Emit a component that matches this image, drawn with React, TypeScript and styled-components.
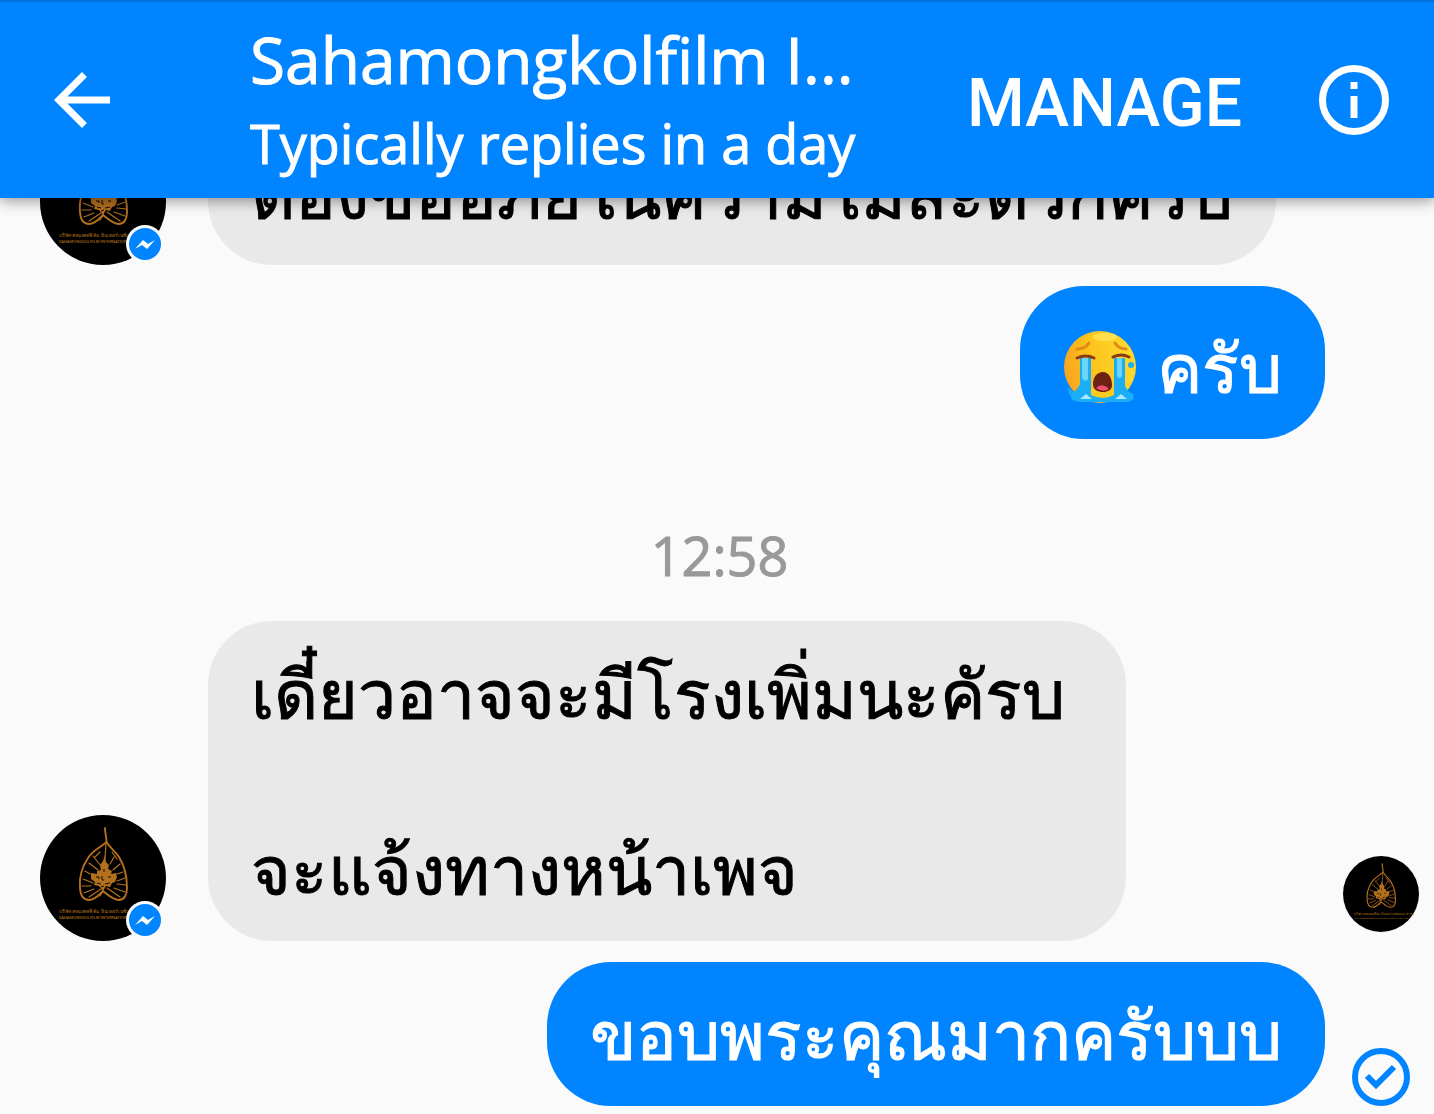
import React from 'react';
import styled, { createGlobalStyle } from 'styled-components';

const GlobalStyle = createGlobalStyle`
  *, *::before, *::after { box-sizing: border-box; }
  body {
    margin: 0;
    background: #fafafa;
    font-family: "Open Sans", "Noto Sans", sans-serif;
  }
`;

const Screen = styled.div`
  display: flex;
  flex-direction: column;
  height: 100vh;
  overflow: hidden;
`;

const Header = styled.header`
  position: relative;
  z-index: 1;
  flex: none;
  display: flex;
  align-items: center;
  padding: 15px 40px;
  border-top: 2px solid #0071db;
  background: #0084ff;
  color: #fff;
  box-shadow: 0 2px 14px rgba(0, 0, 0, 0.45);
`;

const IconButton = styled.button`
  display: flex;
  flex: none;
  padding: 0;
  border: 0;
  background: none;
  color: inherit;
  cursor: pointer;
`;

const Heading = styled.div`
  flex: 1;
  min-width: 0;
  padding-left: 126px;
  white-space: nowrap;
`;

const Title = styled.h1`
  margin: 0;
  font-size: 64px;
  font-weight: 400;
  line-height: 86px;
  -webkit-text-stroke: 1px currentColor;
`;

const Subtitle = styled.p`
  margin: 0;
  font-size: 54px;
  line-height: 80px;
  -webkit-text-stroke: 1px currentColor;
`;

const ManageButton = styled.button`
  flex: none;
  margin-right: 72px;
  padding: 8px 0 0;
  border: 0;
  background: none;
  color: inherit;
  font: 500 66px/80px Roboto, sans-serif;
  cursor: pointer;
`;

const Thread = styled.main`
  flex: 1;
  min-height: 0;
  display: flex;
  flex-direction: column;
  justify-content: flex-end;
  gap: 21px;
  overflow: hidden;
  padding: 0 15px 8px 40px;
`;

const Row = styled.div<{ $own?: boolean }>`
  flex: none;
  display: flex;
  align-items: flex-end;
  justify-content: ${(p) => (p.$own ? 'flex-end' : 'flex-start')};
`;

const Bubble = styled.div<{ $own?: boolean }>`
  padding: 28px 43px;
  border-radius: 64px;
  background: ${(p) => (p.$own ? '#0084ff' : '#e9e9e9')};
  color: ${(p) => (p.$own ? '#fff' : '#000')};
  font-size: 68px;
  line-height: 88px;
  white-space: pre-line;
  -webkit-text-stroke: 1px currentColor;
`;

const EmojiLine = styled.div`
  display: flex;
  align-items: center;
  gap: 20px;
  padding-top: 9px;
`;

const Status = styled.div<{ $lift?: boolean }>`
  flex: none;
  display: flex;
  justify-content: center;
  width: 76px;
  margin-left: ${(p) => (p.$lift ? 'auto' : '18px')};
  padding-bottom: ${(p) => (p.$lift ? '9px' : '0')};
`;

const Time = styled.time`
  align-self: center;
  padding-top: 50px;
  margin-right: 20px;
  color: #999;
  font-size: 54px;
  line-height: 90px;
  -webkit-text-stroke: 1px currentColor;
`;

const Sender = styled.div`
  position: relative;
  flex: none;
  display: flex;
  margin-right: 42px;
`;

const Badge = styled.svg`
  position: absolute;
  right: 2px;
  bottom: 2px;
`;

function CompanyLogo({ size }: { size: number }) {
  return (
    <svg width={size} height={size} viewBox="0 0 126 126" role="img" aria-label="Sahamongkolfilm">
      <circle cx="63" cy="63" r="63" fill="#000" />
      <g fill="none" stroke="#b3701f" strokeWidth="1.9" strokeLinecap="round" strokeLinejoin="round">
        <path d="M65 13c0 5 1.500 9 1.500 14C60 33 53 35 48 43 42 52 39 63 40 73c.5 8 4 12 9 12 6 0 10-5 14-9 5 4 10 9 16 9 5 0 8-5 8-12 0-12-3-23-8-31-4-6-9-9-12.500-15" />
        <path strokeWidth="1.2" d="M66 29l-1 14M60 37l-5 5M53 41l8 10M49 48l9 7M45 56l5 3M43 64l10 4M42 71l9 0M44 78l10-4M49 82l12-8M72 37l5 7M74 42l-4 7M80 49l-7 6M83 57l-6 2M85 63l-8 3M86 70l-9-1M85 77l-11-4M80 82l-13-9M63 76l-3 5" />
      </g>
      <g fill="#b3701f">
        <path d="M65 40l1 7 3 3-1 4 4 2-1 3 5-1 1 4-2 5-3 1-2 4-4-1-3 5-4-5-5-1 1-3-4-3 0-6 6 1 0-3 4-1-1-5 3-4z" />
      </g>
      <path
        d="M56 62h3v2M62 61v4h2M68 62h3M57 68l4 1M65 69l5-1M64 54v3M61 72l3-1"
        fill="none"
        stroke="#000"
        strokeWidth="0.9"
      />
      <g fill="#b3701f" fontFamily='"Noto Sans", sans-serif' fontWeight="500">
        <text x="19" y="98" fontSize="5">บริษัท สหมงคลฟิล์ม อินเตอร์เนชั่นแนล จำกัด</text>
        <text x="19" y="104" fontSize="4">SAHAMONGKOLFILM INTERNATIONAL CO., LTD</text>
      </g>
    </svg>
  );
}

function SenderAvatar() {
  return (
    <Sender>
      <CompanyLogo size={126} />
      <Badge width="38" height="38" viewBox="0 0 38 38" aria-hidden="true">
        <circle cx="19" cy="19" r="19" fill="#fafafa" />
        <circle cx="19" cy="19" r="16" fill="#0084ff" />
        <path d="M9 24l8-9 5 4 7-4-8 9-5-4z" fill="#fff" />
      </Badge>
    </Sender>
  );
}

function CryingFace() {
  return (
    <svg width="74" height="74" viewBox="0 0 74 74" role="img" aria-label="Loudly crying face">
      <defs>
        <linearGradient id="skin" x1="0" x2="1" y1="0.4" y2="0.2">
          <stop offset="0" stopColor="#f9a51f" />
          <stop offset="0.35" stopColor="#fcc21b" />
          <stop offset="1" stopColor="#ffdc2e" />
        </linearGradient>
      </defs>
      <circle cx="37" cy="37" r="36" fill="url(#skin)" />
      <ellipse cx="42" cy="7" rx="12" ry="4" fill="#ffe04a" />
      <g fill="none" stroke="#e08a1a" strokeWidth="3" strokeLinecap="round">
        <path d="M14 19q8 0 12-6M52 13q4 6 11 6" />
      </g>
      <path d="M8 64q8-6 9-10V28h11v36q10-3 23 0V28h11v28q2 5 8 8 3 7-7 8H20q-14 0-12-8z" fill="#1badf5" />
      <path d="M28 57q10 10 23 0v8q-11 6-23 0z" fill="#fccb20" />
      <path d="M19 28h6v21q-3 4-6-1zM54 28h5v18q-3 4-5 0z" fill="#6bd5fc" />
      <path d="M17 69l6-5 6 5zM52 69l6-5 6 5z" fill="#a8e8ff" />
      <circle cx="68" cy="35" r="3" fill="#1badf5" />
      <path d="M5 57l6 6-5 2z" fill="#1badf5" />
      <g fill="none" stroke="#8a3d12" strokeWidth="3" strokeLinecap="round">
        <path d="M14 28q9-4 17 0M50 27q8-4 16 0" />
      </g>
      <path d="M40 42c6 0 9 7 9 13 0 5-4 7-9 7s-10-2-10-8c0-7 4-12 10-12z" fill="#6d2114" />
      <path d="M33 58q6-6 13 1-6 4-13-1z" fill="#f0506a" />
    </svg>
  );
}

export default function App() {
  return (
    <>
      <GlobalStyle />
      <Screen>
        <Header>
          <IconButton type="button" aria-label="Back">
            <svg width="84" height="84" viewBox="0 0 24 24" fill="currentColor" aria-hidden="true">
              <path d="M20 11H7.830l5.590-5.590L12 4l-8 8 8 8 1.410-1.410L7.830 13H20v-2z" />
            </svg>
          </IconButton>
          <Heading>
            <Title>Sahamongkolfilm I...</Title>
            <Subtitle>Typically replies in a day</Subtitle>
          </Heading>
          <ManageButton type="button">MANAGE</ManageButton>
          <IconButton type="button" aria-label="Conversation information">
            <svg width="80" height="80" viewBox="0 0 80 80" aria-hidden="true">
              <circle cx="40" cy="40" r="31.500" fill="none" stroke="currentColor" strokeWidth="7" />
              <path d="M36.500 22h7v7h-7zM36.500 36h7v22h-7z" fill="currentColor" />
            </svg>
          </IconButton>
        </Header>
        <Thread>
          <Row>
            <SenderAvatar />
            <Bubble>ต้องขออภัยในความไม่สะดวกครับ</Bubble>
          </Row>
          <Row $own>
            <Bubble $own>
              <EmojiLine>
                <CryingFace />
                <span>ครับ</span>
              </EmojiLine>
            </Bubble>
            <Status />
          </Row>
          <Time>12:58</Time>
          <Row>
            <SenderAvatar />
            <Bubble>{'เดี๋ยวอาจจะมีโรงเพิ่มนะคัรบ\u00a0\n\nจะแจ้งทางหน้าเพจ'}</Bubble>
            <Status $lift>
              <CompanyLogo size={76} />
            </Status>
          </Row>
          <Row $own>
            <Bubble $own>ขอบพระคุณมากครับบบ</Bubble>
            <Status>
              <svg width="58" height="58" viewBox="0 0 58 58" role="img" aria-label="Delivered">
                <circle cx="29" cy="29" r="26" fill="none" stroke="#0084ff" strokeWidth="6" />
                <path d="M15 28l9 9 18-18" fill="none" stroke="#0084ff" strokeWidth="6" />
              </svg>
            </Status>
          </Row>
        </Thread>
      </Screen>
    </>
  );
}
